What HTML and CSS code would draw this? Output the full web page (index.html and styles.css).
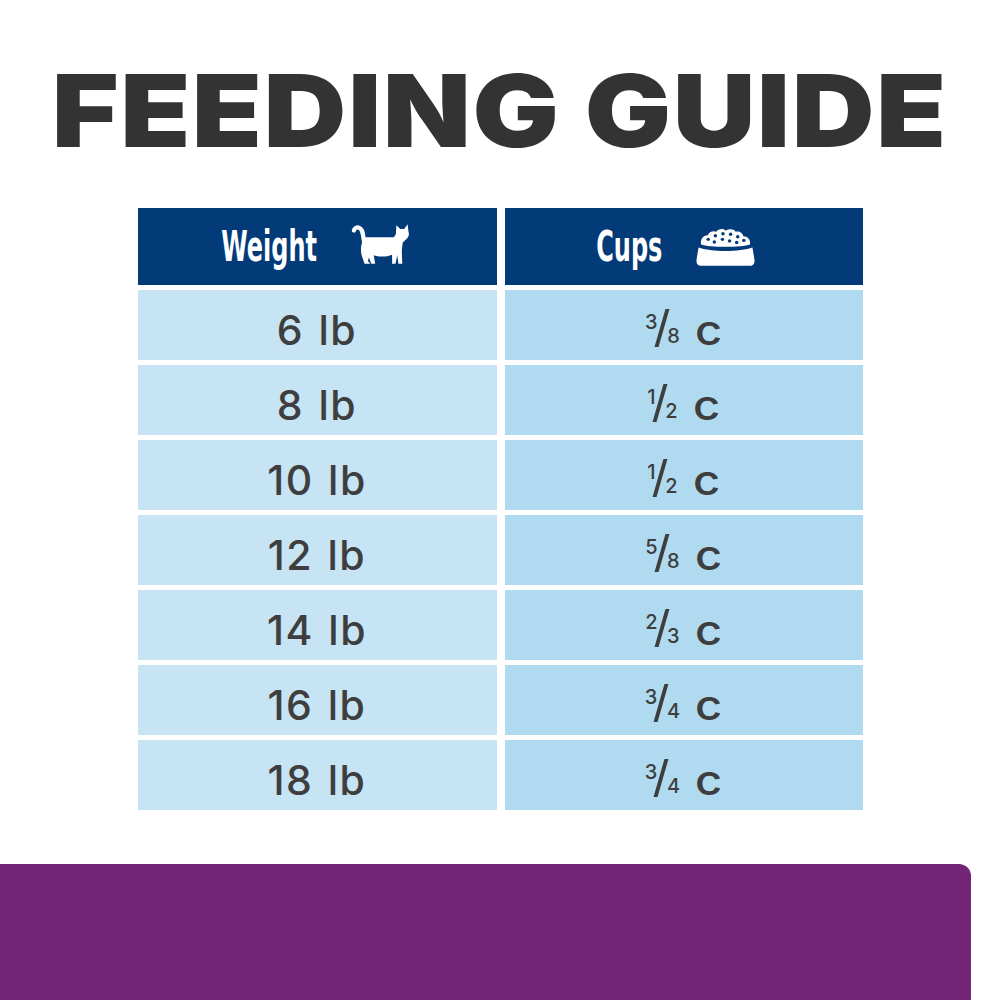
FILE: index.html
```html
<!DOCTYPE html>
<html lang="en">
<head>
<meta charset="utf-8">
<title>Feeding Guide</title>
<link rel="stylesheet" href="styles.css">
</head>
<body>
<main class="page">
  <h1 class="title">FEEDING GUIDE</h1>
  <div class="guide">
    <div class="head head-weight">
      <span class="head-label label-weight">Weight</span>
      <svg class="cat" viewBox="0 0 62 44" aria-hidden="true">
        <path d="M15 21 C13 13, 14 7, 10 5 C7 3.5, 4.5 5, 4 7.5" fill="none" stroke="#fff" stroke-width="4.4" stroke-linecap="round"/>
        <path fill="#fff" d="M15 14.5 L45 14.5 C47 13, 48 11, 47.5 8 L48 2 L52 6 L56 6 L59.5 1 L60.5 9 C61.5 12, 60.5 15, 57.5 17 L54.5 20 L53.5 28 L54 42 L50 42 L48.8 33 L47 42 L43.5 42 L43.5 32.5 C38 35, 29 35, 24.5 33 L26 42 L22 42 L19.5 35.5 L18.5 39 L21 42 L15 42 L13 36 C10.5 30, 10.5 21, 15 14.5 Z"/>
      </svg>
    </div>
    <div class="head head-cups">
      <span class="head-label label-cups">Cups</span>
      <svg class="bowl" viewBox="0 0 58 38" aria-hidden="true">
        <path fill="#fff" d="M5 16 C4 10, 8 7, 11.5 7 C12.5 3.5, 17 2, 20 3.5 C22 0.5, 27 0, 29.5 2.5 C32 0.5, 37 0.5, 39 3.5 C42 2.5, 46 4.5, 46.5 8 C50.5 8, 54 11, 53 16 C45 19, 13 19, 5 16 Z"/>
        <g fill="#033a78">
          <circle cx="12" cy="11" r="1.7"/><circle cx="19" cy="7.5" r="1.7"/><circle cx="26.5" cy="5.5" r="1.7"/>
          <circle cx="34" cy="6" r="1.7"/><circle cx="41" cy="8.5" r="1.7"/><circle cx="47" cy="12" r="1.7"/>
          <circle cx="18" cy="13.5" r="1.7"/><circle cx="26" cy="11" r="1.7"/><circle cx="33" cy="12.5" r="1.7"/>
          <circle cx="40" cy="14" r="1.7"/>
        </g>
        <path fill="#fff" d="M2.5 19 C14 23.5, 44 23.5, 55.5 19 L57.5 31 C58 35, 56 37, 52 37 L6 37 C2 37, 0 35, 0.5 31 Z"/>
      </svg>
    </div>

    <div class="cell cell-w">6 lb</div>
    <div class="cell cell-c"><span class="frac"><span class="num">3</span><span class="sl"></span><span class="den">8</span></span><span class="unit">c</span></div>

    <div class="cell cell-w">8 lb</div>
    <div class="cell cell-c"><span class="frac"><span class="num">1</span><span class="sl"></span><span class="den">2</span></span><span class="unit">c</span></div>

    <div class="cell cell-w">10 lb</div>
    <div class="cell cell-c"><span class="frac"><span class="num">1</span><span class="sl"></span><span class="den">2</span></span><span class="unit">c</span></div>

    <div class="cell cell-w">12 lb</div>
    <div class="cell cell-c"><span class="frac"><span class="num">5</span><span class="sl"></span><span class="den">8</span></span><span class="unit">c</span></div>

    <div class="cell cell-w">14 lb</div>
    <div class="cell cell-c"><span class="frac"><span class="num">2</span><span class="sl"></span><span class="den">3</span></span><span class="unit">c</span></div>

    <div class="cell cell-w">16 lb</div>
    <div class="cell cell-c"><span class="frac"><span class="num">3</span><span class="sl"></span><span class="den">4</span></span><span class="unit">c</span></div>

    <div class="cell cell-w">18 lb</div>
    <div class="cell cell-c"><span class="frac"><span class="num">3</span><span class="sl"></span><span class="den">4</span></span><span class="unit">c</span></div>
  </div>
  <div class="band"></div>
</main>
</body>
</html>
```
FILE: styles.css
```css
* { box-sizing: border-box; }
html, body { margin: 0; padding: 0; background: #fff; }
.page {
  width: 1000px;
  height: 1000px;
  overflow: hidden;
  display: flex;
  flex-direction: column;
  align-items: center;
}
.title {
  margin: 55px 0 0;
  font-family: Inter, "Liberation Sans", sans-serif;
  font-weight: 900;
  font-size: 101px;
  line-height: 110px;
  letter-spacing: 1.3px;
  color: #333333;
  text-align: center;
  transform: scaleX(1.135);
}
.guide {
  margin-top: 43px;
  width: 725px;
  display: grid;
  grid-template-columns: 359px 358px;
  grid-template-rows: 77px repeat(7, 70px);
  column-gap: 8px;
  row-gap: 5px;
}
.head {
  background: #033a78;
  display: flex;
  align-items: center;
  justify-content: center;
  gap: 32px;
  color: #fff;
}
.head-weight { padding-right: 4px; }
.head-cups { padding-right: 17px; gap: 32px; }
.head-label {
  display: inline-block;
  font-family: "DejaVu Sans Condensed", "Liberation Sans", sans-serif;
  font-weight: 700;
  font-size: 43px;
  line-height: 1;
  transform: scaleX(0.62);
}
.label-weight { margin: 0 -28px; }
.label-cups { margin: 0 -19px; }
.cat { width: 60px; height: 43px; margin-top: -4px; }
.bowl { width: 59px; height: 39px; margin-top: 2px; }
.cell {
  display: flex;
  align-items: center;
  justify-content: center;
  padding-top: 10px;
  font-family: Inter, "Liberation Sans", sans-serif;
  font-weight: 500;
  font-size: 41px;
  line-height: 1;
  color: #3e3e3e;
  letter-spacing: 1.5px;
  word-spacing: 2px;
}
.cell-w { background: #c6e4f4; }
.cell-c { background: #afdaf0; }
.unit { transform: scaleX(1.15); display: inline-block; }
.frac {
  display: inline-flex;
  height: 38px;
  margin-right: 17px;
  margin-top: -5px;
}
.num, .den {
  font-size: 20px;
  font-weight: 500;
  line-height: 1;
  letter-spacing: 0;
}
.num { align-self: flex-start; margin-top: 3px; }
.den { align-self: flex-end; margin-bottom: 1px; }
.sl {
  width: 3.6px;
  background: #3e3e3e;
  transform: skewX(-16deg);
  margin: 0 4px 0 2px;
}
.band {
  margin-top: auto;
  align-self: flex-start;
  width: 971px;
  height: 136px;
  background: #722577;
  border-top-right-radius: 12px;
}
```
